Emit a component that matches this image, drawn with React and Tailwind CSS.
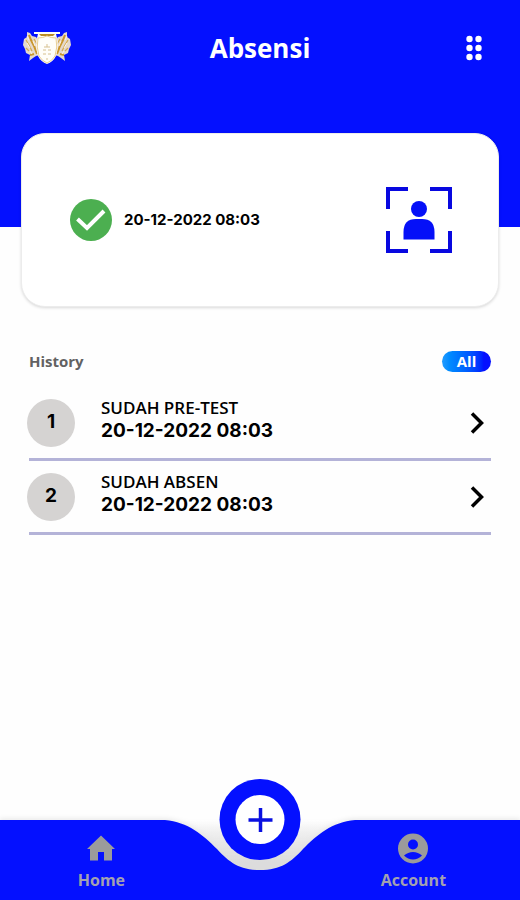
const history = [
    { id: 1, title: 'SUDAH PRE-TEST', date: '20-12-2022 08:03' },
    { id: 2, title: 'SUDAH ABSEN', date: '20-12-2022 08:03' }
];

function Crest() {
    return (
        <svg viewBox="0 0 50 34" className="w-[50px] h-[34px]" aria-hidden="true">
            <g id="wing">
                <path d="M5 1 L8 2 L10 5 L14 6 L17 10 L18 24 L14 25 L11 27 L7 30 L8 24 L4 22 L3 18 L1 14 L2 8 L5 6 Z" fill="#e4d9cc" />
                <path d="M7 4 L9 9 L12 15 L15 23 M8 24 L12 23" stroke="#c9962c" strokeWidth="2" fill="none" />
                <path d="M4 9 L7 14 L10 20 M12 8 L15 13 M4 17 L7 20" stroke="#d3a94f" strokeWidth="1.200" fill="none" />
                <path d="M5 12 L8 17 M11 10 L13 15 M8 20 L10 23 M5 5 L7 9" stroke="#fff6e6" strokeWidth="1" fill="none" />
            </g>
            <use href="#wing" transform="translate(50 0) scale(-1 1)" />
            <path d="M12 1 H38 V3 H34 L35 7 Q37 15 34 25 Q31 31 25 33 Q19 31 16 25 Q13 15 15 7 L16 3 H12 Z" fill="#fffdf6" />
            <path d="M17 3 H33 L31 5 H19 Z" fill="#b98a24" />
            <path d="M16 7 Q21 7 25 5 Q29 7 34 7 Q36 16 33 25 Q30 30 25 32 Q20 30 17 25 Q14 16 16 7 Z" fill="#fffef9" stroke="#e9cf95" strokeWidth="1" />
            <path d="M25 13 V16 M22 16 H28 M21 19 H24 M26 19 H29 M21 23 H24 M26 23 H29 M24 28 H26" stroke="#d6c08f" strokeWidth="1" />
        </svg>
    );
}

function ScanIcon() {
    return (
        <svg viewBox="0 0 66 66" className="w-[66px] h-[66px]" aria-hidden="true">
            <path d="M22 2 H2 V22 M44 2 H64 V22 M22 64 H2 V44 M44 64 H64 V44" fill="none" stroke="#0808e0" strokeWidth="4" />
            <circle cx="33" cy="22" r="8" fill="#0510f8" />
            <path d="M17.500 52.500 V45 Q17.500 32 30 32 H36 Q48.500 32 48.500 45 V52.500 Z" fill="#0510f8" />
        </svg>
    );
}

function HistoryRow({ item }) {
    return (
        <li className="border-b-[3px] border-[#b4b3d8]">
            <button className="flex items-center w-full h-[71px] pr-[6px] text-left text-black">
                <span className="flex items-center justify-center shrink-0 -ml-[2px] w-12 h-12 rounded-full bg-[#d5d3d2] font-bold text-[19px]">
                    {item.id}
                </span>
                <span className="flex-1 ml-[26px] pb-[6px]">
                    <span className="block text-[17px] leading-[22px] font-semibold font-['Open_Sans',sans-serif]">{item.title}</span>
                    <span className="block text-[19px] leading-6 font-bold">{item.date}</span>
                </span>
                <svg viewBox="0 0 16 22" className="w-4 h-[22px]" aria-hidden="true">
                    <path d="M3 1.500 L12.500 11 L3 20.500" fill="none" stroke="#000" strokeWidth="3.500" />
                </svg>
            </button>
        </li>
    );
}

function BottomNav() {
    return (
        <nav className="relative mt-auto h-20">
            <div className="absolute inset-0 flex drop-shadow-[0_-2px_2px_rgba(0,0,0,0.07)]">
                <div className="flex-1 bg-[#0410ff]" />
                <svg viewBox="0 0 200 80" className="w-[200px] h-20 -mx-px" aria-hidden="true">
                    <defs>
                        <linearGradient id="notch" x1="0" y1="0" x2="0" y2="1">
                            <stop offset="0" stopColor="#dcdcdc" stopOpacity="0" />
                            <stop offset="0.7" stopColor="#dcdcdc" />
                        </linearGradient>
                    </defs>
                    <path d="M5 0 H195 L143 60 H57 Z" fill="url(#notch)" />
                    <path d="M0 0 H5 C28 2 43 15 57 29 C69 42 79 50 100 50 C121 50 131 42 143 29 C157 15 172 2 195 0 H200 V80 H0 Z" fill="#0410ff" />
                </svg>
                <div className="flex-1 bg-[#0410ff]" />
            </div>
            <button aria-label="Tambah" className="absolute left-1/2 -top-[41px] -translate-x-1/2 flex items-center justify-center w-[81px] h-[81px] rounded-full bg-[#0410ff]">
                <span className="flex items-center justify-center w-[49px] h-[49px] rounded-full bg-white">
                    <svg viewBox="0 0 26 26" className="w-[26px] h-[26px]" aria-hidden="true">
                        <path d="M13 1 V25 M1 13 H25" stroke="#0a10e0" strokeWidth="3.500" />
                    </svg>
                </span>
            </button>
            <div className="relative grid grid-cols-[39fr_20fr_41fr] pt-3 font-bold text-base leading-6 text-[#a3a1b0] font-['Open_Sans',sans-serif] pointer-events-none">
                <a href="#home" className="flex flex-col items-center gap-1 pointer-events-auto">
                    <svg viewBox="0 0 32 32" className="w-8 h-8" aria-hidden="true">
                        <path d="M16 3.500 L30 17 H27 V28.500 H19 V20 H13 V28.500 H5 V17 H2 Z" fill="#9b9b9b" />
                    </svg>
                    Home
                </a>
                <a href="#account" className="col-start-3 flex flex-col items-center gap-1 pointer-events-auto">
                    <svg viewBox="0 0 32 32" className="w-8 h-8" aria-hidden="true">
                        <circle cx="16" cy="16.500" r="15" fill="#9b9b9b" />
                        <circle cx="16" cy="12.500" r="5" fill="#0410ff" />
                        <path d="M7 23.500 Q11 20 16 20 Q21 20 25 23.500 Q21 27.500 16 27.500 Q11 27.500 7 23.500 Z" fill="#0410ff" />
                    </svg>
                    Account
                </a>
            </div>
        </nav>
    );
}

export default function App() {
    return (
        <div className="flex flex-col min-h-screen bg-[#fefefe] font-[Inter,sans-serif]">
            <header className="h-[227px] bg-[#0410ff]">
                <div className="grid grid-cols-[50px_1fr_50px] items-center px-[22px] pt-7">
                    <Crest />
                    <h1 className="text-center text-white font-bold text-[26px] leading-10 font-['Open_Sans',sans-serif]">Absensi</h1>
                    <button aria-label="Menu" className="justify-self-end pr-4">
                        <svg viewBox="0 0 16 26" className="w-4 h-[26px]" fill="#fff" aria-hidden="true">
                            {[4, 13, 22].map((y) => (
                                <g key={y}>
                                    <circle cx="3.500" cy={y} r="3.200" />
                                    <circle cx="12.500" cy={y} r="3.200" />
                                </g>
                            ))}
                        </svg>
                    </button>
                </div>
            </header>

            <section className="flex items-center mx-[21px] -mt-[94px] h-[174px] pl-12 pr-[46px] rounded-3xl bg-white border border-[#ececec] shadow-[0_1px_3px_rgba(0,0,0,0.15)]">
                <svg viewBox="0 0 42 42" className="w-[42px] h-[42px]" aria-hidden="true">
                    <circle cx="21" cy="21" r="21" fill="#4caf50" />
                    <path d="M7.500 20 L17 29 L34 12" fill="none" stroke="#fff" strokeWidth="4" />
                </svg>
                <p className="flex-1 ml-3 font-bold text-[15px] text-black">20-12-2022 08:03</p>
                <ScanIcon />
            </section>

            <main className="px-[29px] pt-[42px]">
                <div className="flex items-center justify-between h-6">
                    <h2 className="font-bold text-[15px] text-[#626262] font-['Open_Sans',sans-serif]">History</h2>
                    <button className="w-[49px] h-[21px] rounded-full bg-linear-to-r from-[#209cff] to-[#0510ff] to-85% font-bold text-[15px] leading-[21px] text-white font-['Open_Sans',sans-serif]">
                        All
                    </button>
                </div>
                <ul className="pt-[14px]">
                    {history.map((item) => (
                        <HistoryRow key={item.id} item={item} />
                    ))}
                </ul>
            </main>

            <BottomNav />
        </div>
    );
}
